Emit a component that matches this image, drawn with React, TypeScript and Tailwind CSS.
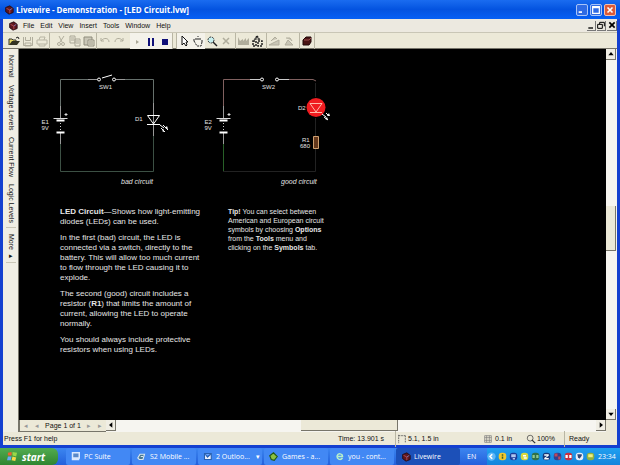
import type { ReactNode } from 'react'

const Icon = ({ children, size = 12 }: { children: ReactNode; size?: number }) => (
  <svg width={size} height={size} viewBox="0 0 12 12" fill="none" className="shrink-0">
    {children}
  </svg>
)

const Chip = () => (
  <Icon size={10}>
    <path d="M2 3L7 1L11 4V9L6 11L2 8Z" fill="#5c1620" stroke="#200810" />
    <path d="M3 4L7 6V10" stroke="#c05050" />
    <path d="M7 6L10 4" stroke="#8080c0" />
  </Icon>
)

const Sep = () => <div className="h-4 w-px shrink-0 bg-[#b9b6a4]" />

const Tool = ({ label, children }: { label: string; children: ReactNode }) => (
  <button aria-label={label} className="flex h-4 w-[14px] shrink-0 items-center justify-center">
    <Icon>{children}</Icon>
  </button>
)

const TitleBar = () => (
  <header className="flex h-[19px] items-center bg-linear-to-b from-[#1a6cf0] via-[#0453e0] to-[#0660f5] pr-1 pl-1">
    <Chip />
    <h1 className="ml-[2px] flex-1 font-['Open_Sans',sans-serif] text-[8px] font-bold text-white">
      Livewire - Demonstration - [LED Circuit.lvw]
    </h1>
    <div className="flex gap-[2px]">
      <button aria-label="Minimize" className="h-3 w-3 rounded-xs border border-[#a8c4f8] bg-[#2f6be4]">
        <Icon size={10}><path d="M2 8.5H6" stroke="white" strokeWidth="2" /></Icon>
      </button>
      <button aria-label="Restore" className="h-3 w-3 rounded-xs border border-[#a8c4f8] bg-[#2f6be4]">
        <Icon size={10}><path d="M2 2H10V10H2ZM2 3H10" stroke="white" strokeWidth="1.5" /></Icon>
      </button>
      <button aria-label="Close" className="h-3 w-3 rounded-xs border border-[#f0c0b0] bg-[#dc5a38]">
        <Icon size={10}><path d="M3 3L9 9M9 3L3 9" stroke="white" strokeWidth="2" /></Icon>
      </button>
    </div>
  </header>
)

const menus = ['File', 'Edit', 'View', 'Insert', 'Tools', 'Window', 'Help']

const MenuBar = () => (
  <nav className="flex h-[14px] items-center border-b border-[#c9c6b6] bg-[#ece9e0] pl-[5px]">
    <Chip />
    <div className="ml-[5px] flex flex-1 gap-[6px]">
      {menus.map((m) => (
        <button key={m}>{m}</button>
      ))}
    </div>
    <div className="flex gap-px">
      <button aria-label="Minimize document" className="flex h-[10px] w-[9px] items-end justify-center border-r border-b border-[#777]">
        <Icon size={8}><path d="M2 9H9" stroke="black" strokeWidth="2" /></Icon>
      </button>
      <button aria-label="Restore document" className="flex h-[10px] w-[9px] items-center justify-center border-r border-b border-[#777]">
        <Icon size={8}><path d="M4 5V2H11V8M1 5H8V11H1Z" stroke="black" strokeWidth="1.5" /></Icon>
      </button>
      <button aria-label="Close document" className="flex h-[10px] w-[10px] items-center justify-center border-r border-b border-[#777]">
        <Icon size={8}><path d="M2 2L10 10M10 2L2 10" stroke="black" strokeWidth="2.5" /></Icon>
      </button>
    </div>
  </nav>
)

const Toolbar = () => (
  <div className="flex h-4 items-center border-b border-[#77756a] bg-[#ece9d8] pl-1">
    <Tool label="Open">
      <path d="M1 10V4H4L5 5H8V6" stroke="#333" fill="#e8d860" />
      <path d="M1 10L4 6H12L9 10Z" fill="#333322" />
      <path d="M8 3L10 2L11 4" stroke="#222" />
    </Tool>
    <Tool label="Save">
      <path d="M1.500 2V10.500H10.500V2" stroke="#b0ad9c" />
      <path d="M3.500 2V5.500H8.500V2M3 8H9V11H3Z" stroke="#b0ad9c" />
    </Tool>
    <Tool label="Print">
      <path d="M3 5L4 2H9L8 5M1 5H11V9H1ZM3 9V11H9V9" stroke="#b8b5a4" />
    </Tool>
    <Sep />
    <div className="w-1" />
    <Tool label="Cut">
      <path d="M4 1L7 7M9 1L5 7" stroke="#b0ad9c" />
      <circle cx="4" cy="9" r="1.5" stroke="#b0ad9c" />
      <circle cx="8" cy="9" r="1.5" stroke="#b0ad9c" />
    </Tool>
    <Tool label="Copy">
      <path d="M1 1H6V8H1ZM6 4H11V11H6ZM2 3H5M2 5H5M7 6H10M7 8H10" stroke="#aaa797" />
    </Tool>
    <Tool label="Paste">
      <path d="M1 2H9V10H1Z" stroke="#8f8c7c" fill="#c9c6b6" />
      <path d="M5 5H11V11H5ZM6 7H10M6 9H10" stroke="#8f8c7c" fill="#ece9d8" />
    </Tool>
    <Sep />
    <div className="w-px" />
    <Tool label="Undo"><path d="M2 3V6H5M2 6C5 2 10 3 10 7" stroke="#b0ad9c" /></Tool>
    <Tool label="Redo"><path d="M10 3V6H7M10 6C7 2 2 3 2 7" stroke="#b0ad9c" /></Tool>
    <div className="ml-1 flex bg-[#f4f2ea]">
      <Tool label="Run"><path d="M5 5L8 7L5 9Z" fill="#aaa797" /></Tool>
      <Tool label="Pause"><path d="M3 3H5V11H3ZM7 3H9V11H7Z" fill="#101078" /></Tool>
      <Tool label="Stop"><path d="M3 4H9V10H3Z" fill="#101078" /></Tool>
    </div>
    <Sep />
    <div className="w-[3px]" />
    <Sep />
    <div className="flex bg-[#f4f2ea]">
      <Tool label="Select"><path d="M4 1V10L6 8L8 11L9 10L8 7H10Z" fill="white" stroke="#111" /></Tool>
      <Tool label="Pan">
        <path d="M2 6V4M4 5V2M6 5V1M8 5V2M10 7V4M2 6L5 11H9L10 7" stroke="#222" strokeDasharray="2 1" />
      </Tool>
    </div>
    <Tool label="Zoom">
      <circle cx="5" cy="5" r="3" stroke="#333" strokeDasharray="2 1" fill="#c8f0f0" />
      <path d="M7 7L11 11" stroke="#222" strokeWidth="1.5" />
    </Tool>
    <Tool label="Delete"><path d="M3 3L9 9M9 3L3 9" stroke="#b0ad9c" strokeWidth="1.5" /></Tool>
    <div className="w-[2px]" />
    <Sep />
    <Tool label="Graph"><path d="M1 2V10H12V3L9 6V3L6 6V4L3 6Z" fill="#b0ad9c" /></Tool>
    <Tool label="Gallery">
      <path d="M6 1L8 4H4ZM2 6H5V11H2ZM7 6H11V11H7Z" stroke="#222" strokeWidth="1.5" strokeDasharray="2 1" />
    </Tool>
    <div className="w-[2px]" />
    <Sep />
    <Tool label="Rotate left"><path d="M1 10H11V5ZM3 6L7 2L9 4" stroke="#b0ad9c" fill="#c9c6b6" /></Tool>
    <Tool label="Rotate right"><path d="M11 10H3L6 5ZM4 3H8L10 6" stroke="#b0ad9c" fill="#c9c6b6" /></Tool>
    <div className="w-1" />
    <Sep />
    <Tool label="Convert">
      <path d="M2 5L5 2H10V7L8 10H2Z" fill="#4b1414" stroke="#210808" />
      <path d="M3 5H8L10 3" stroke="#a05050" />
    </Tool>
    <Sep />
  </div>
)

const Battery = ({ x, name }: { x: number; name: string }) => (
  <g>
    <path d={`M${x} 106V118M${x} 132V144`} stroke="#999" />
    <path d={`M${x - 7} 118.5H${x + 7}`} stroke="#ddd" />
    <path d={`M${x - 4} 120.5H${x + 4}M${x - 4} 132.5H${x + 4}`} stroke="white" strokeWidth="2" />
    <path d={`M${x} 123V131`} stroke="#ccc" strokeDasharray="1 2" />
    <path d={`M${x + 4} 114.5H${x + 7}M${x + 5.5} 113V116`} stroke="#ddd" />
    <text x={x - 19} y="124">{name}</text>
    <text x={x - 19} y="130">9V</text>
  </g>
)

const Circuits = () => (
  <svg
    width="330"
    height="156"
    viewBox="19 49 330 156"
    fill="none"
    className="font-['Liberation_Sans',sans-serif] text-[6px] [&_text]:fill-[#e4e4e4]"
  >
    <path d="M60.5 112V79.5H97M116 79.5H153.5V110" stroke="#66706c" />
    <path d="M60.5 140V171.5H153.5V132" stroke="#3c5044" />
    <path d="M88 79.5H97M116 79.5H125M153.5 103V136" stroke="#999" />
    <circle cx="99" cy="79.5" r="1.5" stroke="white" />
    <circle cx="114" cy="79.5" r="1.5" stroke="white" />
    <path d="M102 78L112 75" stroke="white" />
    <text x="99" y="89">SW1</text>
    <Battery x={60.5} name="E1" />
    <text x="135" y="121">D1</text>
    <path d="M147.5 115.5H159.5L153.5 124ZM147 124.5H160" stroke="white" />
    <path d="M160 125L164 128M163 125L168 130M161 128L165 132" stroke="white" />
    <path d="M164 132L162 131L164 129ZM168 129L165 128L167 126Z" fill="white" />
    <text x="121" y="184" className="text-[7px] italic">bad circuit</text>

    <path d="M223.5 112V79.5H260M279 79.5H313L316 81" stroke="#80605f" />
    <path d="M250 79.5H260M279 79.5H289" stroke="#ccc" />
    <path d="M223.5 142V171" stroke="#286028" />
    <path d="M223 171.5H315.5V149M315.5 118V136M315.5 83V97" stroke="#222" />
    <circle cx="262" cy="79.5" r="1.5" stroke="white" />
    <circle cx="277" cy="79.5" r="1.5" stroke="white" />
    <text x="262" y="89">SW2</text>
    <Battery x={223.5} name="E2" />
    <text x="298" y="110">D2</text>
    <circle cx="316" cy="107.5" r="9.5" fill="#f01c20" />
    <path d="M310 103.5H322L316 112ZM310 112.5H322" stroke="#ffb8a8" />
    <path d="M322 114L326 117M326 113L329 116M324 117L328 120" stroke="white" />
    <path d="M328 120L325 119L327 117ZM330 116L327 116L329 113Z" fill="white" />
    <path d="M313.5 136.5H318.5V148.5H313.5Z" fill="#64381c" stroke="#d0a070" />
    <text x="302" y="142">R1</text>
    <text x="300" y="148">680</text>
    <text x="281" y="184" className="text-[7px] italic">good circuit</text>
  </svg>
)

const Canvas = () => (
  <main className="flex-1 bg-black text-[#e6e6e6]">
    <Circuits />
    <div className="flex gap-[24px] pt-[2px] pl-[41px]">
      <div className="flex w-[144px] flex-col gap-[6px] text-[8px] leading-[10px]">
        <p>
          <b>LED Circuit</b>—Shows how light-emitting<br />diodes (LEDs) can be used.
        </p>
        <p>
          In the first (bad) circuit, the LED is<br />connected via a switch, directly to the<br />
          battery. This will allow too much current<br />to flow through the LED causing it to<br />explode.
        </p>
        <p>
          The second (good) circuit includes a<br />resistor (<b>R1</b>) that limits the amount of<br />
          current, allowing the LED to operate<br />normally.
        </p>
        <p>
          You should always include protective<br />resistors when using LEDs.
        </p>
      </div>
      <p className="text-[7px] leading-[9px]">
        <b>Tip!</b> You can select between<br />American and European circuit<br />
        symbols by choosing <b>Options</b><br />from the <b>Tools</b> menu and<br />
        clicking on the <b>Symbols</b> tab.
      </p>
    </div>
  </main>
)

const SideTabs = () => (
  <aside className="flex w-4 shrink-0 flex-col items-center border-r border-[#77756a] bg-[#f0eee4] pt-[6px] [writing-mode:vertical-rl]">
    <div className="flex h-full w-full items-center">
      <div className="flex gap-[7px] border-b border-[#c9c6b6] pb-1">
        <button>Normal</button>
        <button>Voltage Levels</button>
        <button>Current Flow</button>
        <button>Logic Levels</button>
      </div>
      <button className="border-b border-[#c9c6b6] pt-[6px] pb-[2px]">More ▸</button>
    </div>
  </aside>
)

const Arrow = ({ d, label }: { d: string; label: string }) => (
  <button
    aria-label={label}
    className="flex h-[11px] w-[10px] shrink-0 items-center justify-center border-r border-b border-[#77756a] bg-[#f0eee4]"
  >
    <Icon size={8}><path d={d} fill="black" /></Icon>
  </button>
)

const PageBar = () => (
  <div className="flex h-3 bg-[#f6f5f0]">
    <div className="flex w-[87px] items-center justify-between border-b border-l border-[#77756a] bg-[#ece9d8] px-1">
      <button aria-label="First page" className="text-[#999]">◂</button>
      <button aria-label="Previous page" className="text-[#999]">◂</button>
      <span>Page 1 of 1</span>
      <button aria-label="Next page" className="text-[#999]">▸</button>
      <button aria-label="Last page" className="text-[#999]">▸</button>
    </div>
    <Arrow label="Scroll left" d="M8 2V10L3 6Z" />
    <div className="flex flex-1 justify-end">
      <div className="h-[11px] w-[97px] border-r border-b border-[#77756a] bg-[#ece9d8]" />
      <div className="w-[198px]" />
    </div>
    <Arrow label="Scroll right" d="M4 2V10L9 6Z" />
    <div className="w-[11px] bg-[#ece9d8]" />
  </div>
)

const StatusBar = () => (
  <footer className="flex h-[13px] items-center bg-[#ece9d8] pl-px whitespace-nowrap">
    <span className="flex-1">Press F1 for help</span>
    <span className="w-[57px]">Time: 13.901 s</span>
    <Sep />
    <div className="flex w-[88px] items-center gap-px pl-px">
      <Icon size={10}><path d="M2 1V11M2 2H10M10 2V11" stroke="#555" strokeDasharray="2 1" /></Icon>
      5.1, 1.5 in
    </div>
    <div className="flex w-[42px] items-center gap-[3px]">
      <Icon size={8}><path d="M1 1H11V11H1ZM1 4H11M1 8H11M4 1V11M8 1V11" stroke="#777" /></Icon>
      0.1 in
    </div>
    <div className="flex w-[38px] items-center gap-px">
      <Icon size={10}>
        <circle cx="5" cy="5" r="3.5" stroke="#555" />
        <path d="M7 7L11 11" stroke="#333" strokeWidth="1.5" />
      </Icon>
      100%
    </div>
    <Sep />
    <span className="w-[52px] pl-1">Ready</span>
  </footer>
)

const tasks = [
  { text: 'PC Suite', icon: <path d="M2 1H11V8H2ZM1 10H11" stroke="#dbe8ff" strokeWidth="2" fill="#5a88c8" /> },
  { text: 'S2 Mobile ...', icon: <path d="M1 8L4 3H10L8 10H3ZM5 6H8" stroke="#d8e6f0" fill="#4a7890" strokeWidth="1.5" /> },
  { text: '2 Outloo...', icon: <path d="M2 2H11V10H2ZM3 3L6 7L10 3" stroke="#2860b0" fill="#f0f4ff" strokeWidth="1.5" />, more: true },
  { text: 'Games - a...', icon: <path d="M1 5L6 1L11 6L7 11L3 10Z" stroke="#205818" fill="#8cc040" strokeWidth="1.5" /> },
  { text: 'you - cont...', icon: <path d="M10 8C7 12 2 9 3 5C4 1 10 2 10 6H4" stroke="#b8f0c8" strokeWidth="2" /> },
]

const tray = [
  { fill: '#f0c830', d: 'M5 3H7V5H5ZM5 6H7V9H5Z', mark: '#406020' },
  { fill: '#1c3c98', d: 'M3 3H9V7H3ZM5 8H8V10H5Z', mark: '#b0c8f0' },
  { fill: '#d8d840', d: 'M4 4H8V6H4ZM5 7H9V9H5Z', mark: '#fff' },
  { fill: '#307048', d: 'M2 4H5V8H2ZM7 4H10V8H7Z', mark: '#90c890' },
  { fill: '#183878', d: 'M3 3H9V5L5 8H9V10H3V8L7 5H3Z', mark: '#fff' },
  { fill: '#34408c', d: 'M2 2H6V6H2ZM7 6H10V10H7Z', mark: '#c04858' },
  { fill: '#c83040', d: 'M2 4H5V8H2ZM7 4H10V8H7Z', mark: '#fff' },
  { fill: '#e8eef8', d: 'M3 3H9V5L6 9L4 7Z', mark: '#304878' },
  { fill: '#90b040', d: 'M3 3H9V7H3Z', mark: '#f0f080' },
]

const Taskbar = () => (
  <div className="flex h-[17px] items-stretch bg-linear-to-b from-[#3c86f0] to-[#2460dc] font-['Open_Sans',sans-serif] text-[7px] text-white">
    <button className="flex w-[58px] shrink-0 items-center gap-1 rounded-r-md bg-linear-to-b from-[#52ac50] to-[#2f8530] pl-[7px] text-[10px] font-bold italic">
      <Icon size={11}>
        <path d="M1 2L5 1V5H1Z" fill="#f06030" />
        <path d="M6 1L11 2L10 6L6 5Z" fill="#98d848" />
        <path d="M1 6H5L4 10L0 10Z" fill="#68a8f8" />
        <path d="M6 6L10 7L9 11L5 10Z" fill="#f8d848" />
      </Icon>
      start
    </button>
    <div className="flex flex-1 gap-[2px] pr-1 pl-2">
      {tasks.map((t) => (
        <button key={t.text} className="flex flex-1 items-center gap-1 rounded-xs bg-[#4288f4] pl-[5px] whitespace-nowrap">
          <Icon size={9}>{t.icon}</Icon>
          {t.text}
          {t.more && <span className="ml-auto pr-[2px]">▾</span>}
        </button>
      ))}
      <button className="flex flex-1 items-center gap-[3px] rounded-xs bg-[#1c50b8] pl-[5px]">
        <Chip />
        Livewire
      </button>
    </div>
    <span className="flex w-[23px] items-center pl-[3px]">EN</span>
    <div className="flex w-[133px] items-center gap-[2px] bg-linear-to-b from-[#20a0f0] to-[#1484dc]">
      <Icon size={9}>
        <circle cx="6" cy="6" r="5.5" fill="#60b8f8" />
        <path d="M7 3L4 6L7 9" stroke="white" strokeWidth="2" />
      </Icon>
      {tray.map((t) => (
        <Icon key={t.fill} size={9}>
          <rect x="1" y="1" width="10" height="10" rx="4" fill={t.fill} />
          <path d={t.d} fill={t.mark} />
        </Icon>
      ))}
      <time className="ml-px">23:34</time>
    </div>
  </div>
)

export default function App() {
  return (
    <div className="flex min-h-screen flex-col bg-[#1440d0] font-['Liberation_Sans',sans-serif] text-[7px] leading-[10px] text-[#111]">
      <TitleBar />
      <div className="flex flex-1 flex-col border-r-[3px] border-b-[3px] border-l-[3px] border-[#1440d0] bg-[#ece9d8]">
        <MenuBar />
        <Toolbar />
        <div className="flex flex-1">
          <SideTabs />
          <div className="flex flex-1 flex-col">
            <div className="flex flex-1">
              <Canvas />
              <div className="flex w-[11px] flex-col justify-between bg-[#f6f5f0]">
                <Arrow label="Scroll up" d="M2 8H10L6 3Z" />
                <div className="mb-3 h-[45px] w-[10px] border-r border-b border-[#77756a] bg-[#ece9d8]" />
                <Arrow label="Scroll down" d="M2 4H10L6 9Z" />
              </div>
            </div>
            <PageBar />
          </div>
        </div>
        <StatusBar />
      </div>
      <Taskbar />
    </div>
  )
}
